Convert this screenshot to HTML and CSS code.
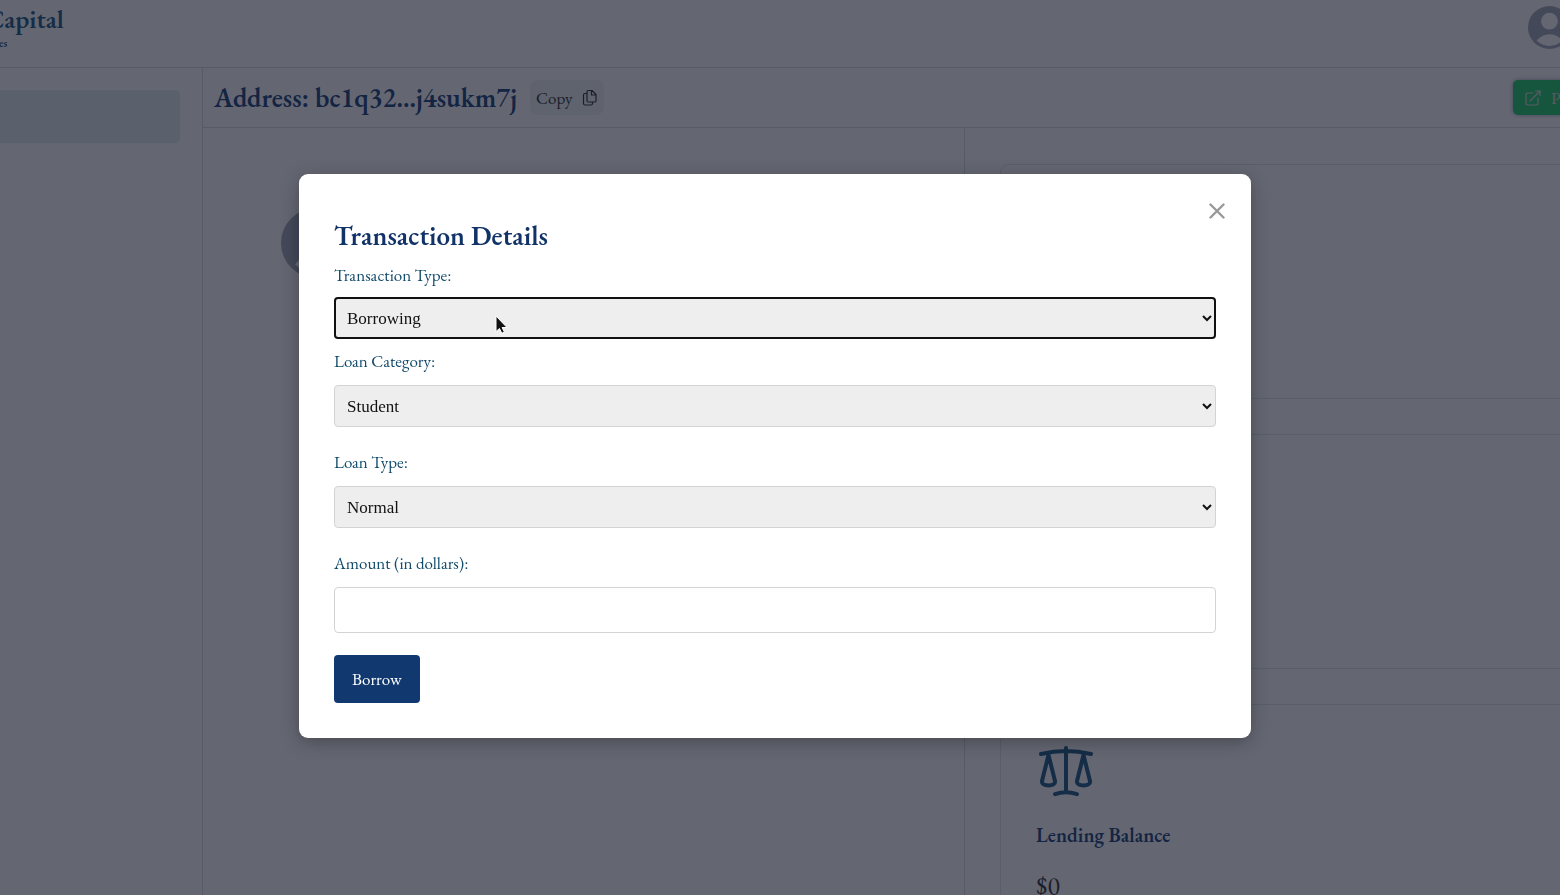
FILE: index.html
```html
<!DOCTYPE html>
<html lang="en">
<head>
<meta charset="utf-8">
<title>Capital</title>
<link rel="stylesheet" href="styles.css">
</head>
<body>
<svg class="defs" aria-hidden="true">
  <symbol id="user" viewBox="0 0 43 43">
    <path fill-rule="evenodd" d="M21.5 0a21.500 21.500 0 1 1 0 43a21.500 21.500 0 0 1 0-43zM21.500 6.800a8.400 8.400 0 1 0 0 16.800a8.400 8.400 0 0 0 0-16.800zM8.600 34.600C12 38 16.500 39.900 21.500 39.900S31 38 34.400 34.600C31 30.500 26.500 28.200 21.500 28.200S12 30.500 8.600 34.600z"/>
  </symbol>
</svg>
<div class="page">
  <header class="header">
    <div class="brand">
      <div class="brand-name">Capital</div>
      <div class="brand-sub">es</div>
    </div>
    <svg class="user-icon" aria-hidden="true"><use href="#user"/></svg>
  </header>
  <div class="body">
    <nav class="sidebar"><div class="nav-item"></div></nav>
    <main class="main">
      <div class="topbar">
        <h1 class="address">Address: bc1q32...j4sukm7j</h1>
        <button class="copy" type="button">Copy
          <svg width="16" height="18" viewBox="0 0 16 18" fill="none" stroke="currentColor" stroke-width="1.2" stroke-linejoin="round" aria-hidden="true"><path d="M10 1.500H6.500A1.500 1.500 0 0 0 5 3v8.500A1.500 1.500 0 0 0 6.500 13h6A1.500 1.500 0 0 0 14 11.500V5.500zM9.500 1.500V6H14M5 4.500H3A1.500 1.500 0 0 0 1.500 6v8.500A1.500 1.500 0 0 0 3 16h6a1.500 1.500 0 0 0 1.500-1.500V13"/></svg>
        </button>
        <button class="open" type="button">
          <svg width="16" height="16" viewBox="0 0 16 16" fill="none" stroke="currentColor" stroke-width="1.200" stroke-linecap="round" stroke-linejoin="round" aria-hidden="true"><path d="M8 3H2.500A1.500 1.500 0 0 0 1 4.500v9A1.500 1.500 0 0 0 2.500 15h9a1.500 1.500 0 0 0 1.500-1.500V8M10.500 1H15v4.500M15 1L5 11"/></svg>
          <span>Po</span>
        </button>
      </div>
      <div class="columns">
        <section class="profile"><svg class="profile-icon" aria-hidden="true"><use href="#user"/></svg></section>
        <section class="cards">
          <div class="card"></div>
          <div class="card"></div>
          <div class="card">
            <svg class="scale" width="60" height="60" viewBox="0 0 60 60" fill="none" stroke="currentColor" stroke-width="4" stroke-linecap="round" stroke-linejoin="round" aria-hidden="true"><path d="M30 8v44M5 14Q30 8 55 14M19 54.200Q30 50.500 41 54.200M12.500 15L6 41c-.6 3 2.500 4.500 6.500 4.500s7.100-1.500 6.500-4.500zM47.500 15L41 41c-.6 3 2.500 4.500 6.500 4.500s7.100-1.500 6.500-4.500z"/></svg>
            <h2 class="card-title">Lending Balance</h2>
            <p class="card-value">$0</p>
          </div>
        </section>
      </div>
    </main>
  </div>
</div>
<div class="overlay">
  <form class="modal" role="dialog" aria-labelledby="title">
    <button class="close" type="button" aria-label="Close"><svg width="16" height="16" viewBox="0 0 16 16" fill="none" stroke="currentColor" stroke-width="2.400" stroke-linecap="round" aria-hidden="true"><path d="M1.500 1.500l13 13M14.500 1.500l-13 13"/></svg></button>
    <h2 class="title" id="title">Transaction Details</h2>
    <div class="field field-first">
      <label for="transaction">Transaction Type:</label>
      <select class="active" id="transaction"><option>Borrowing</option></select>
    </div>
    <div class="field">
      <label for="category">Loan Category:</label>
      <select id="category"><option>Student</option></select>
    </div>
    <div class="field">
      <label for="loan">Loan Type:</label>
      <select id="loan"><option>Normal</option></select>
    </div>
    <div class="field">
      <label for="amount">Amount (in dollars):</label>
      <input id="amount" type="text">
    </div>
    <button class="submit" type="submit">Borrow</button>
  </form>
  <svg class="cursor" width="14" height="20" viewBox="0 0 14 20" aria-hidden="true"><path d="M1 1v15.500l3.500-3 2.300 4.800 2.600-1.200-2.300-4.600H12z" fill="#111" stroke="#fff" stroke-width="1"/></svg>
</div>
</body>
</html>
```
FILE: styles.css
```css
* { box-sizing: border-box; }
body {
  margin: 0;
  height: 100vh;
  overflow: hidden;
  font-family: "EB Garamond", "Liberation Serif", serif;
  font-size: 17px;
  background: #fff;
}
h1, h2, p { margin: 0; }
button, input, select { font: inherit; }
svg { flex: none; display: block; }
.defs { position: absolute; width: 0; height: 0; }

.page { height: 100vh; display: flex; flex-direction: column; overflow: hidden; }
.header {
  height: 68px;
  flex: none;
  display: flex;
  justify-content: space-between;
  border-bottom: 1px solid #d8dce0;
}
.brand { color: #1d5a80; margin-left: -14px; padding-top: 5px; font-weight: 600; }
.brand-name { font-size: 26px; line-height: 28px; }
.brand-sub { font-size: 11px; line-height: 20px; padding-left: 13px; }
.user-icon { width: 43px; height: 43px; margin: 6px -11px 0 0; fill: #a4a8b8; }

.body { flex: 1; display: flex; min-height: 0; }
.sidebar { width: 203px; flex: none; padding: 22px 22px 0 0; border-right: 1px solid #d8dce0; }
.nav-item { height: 53px; border-radius: 0 5px 5px 0; background: #e4eaf1; }
.main { flex: 1; min-width: 0; display: flex; flex-direction: column; }
.topbar {
  height: 60px;
  flex: none;
  display: flex;
  align-items: center;
  padding-left: 11px;
  border-bottom: 1px solid #d8dce0;
}
.address { font-size: 27px; font-weight: 600; line-height: 36px; color: #1b4079; white-space: nowrap; }
.copy {
  display: flex;
  align-items: center;
  gap: 10px;
  height: 35px;
  margin-left: 13px;
  padding: 0 6px;
  border: 0;
  border-radius: 8px;
  background: #edf2f2;
  color: #333;
}
.open {
  display: flex;
  align-items: center;
  gap: 10px;
  width: 62px;
  height: 35px;
  margin: 0 -15px 0 auto;
  padding: 0 12px;
  border: 0;
  border-radius: 5px;
  background: #22cc6a;
  color: #ddd;
  box-shadow: 0 0 4px #99a;
}
.columns { flex: 1; min-height: 0; display: flex; }
.profile { flex: 0 0 56.15%; padding: 80px 78px; border-right: 1px solid #d8dce0; }
.profile-icon { width: 70px; height: 70px; fill: #a4a8b8; }
.cards {
  flex: 1;
  display: flex;
  flex-direction: column;
  gap: 35px;
  margin-right: -20px;
  padding: 36px 0 0 35px;
}
.card {
  flex: none;
  height: 235px;
  padding: 35px;
  border: 1px solid #e3e6e9;
  border-radius: 8px;
}
.scale { color: #1d5a80; }
.card-title { margin-top: 20px; font-size: 20px; font-weight: 600; line-height: 30px; color: #1b4079; }
.card-value { margin-top: 19px; font-size: 26px; line-height: 34px; color: #333; }

.overlay {
  position: fixed;
  inset: 0;
  display: flex;
  justify-content: center;
  align-items: flex-start;
  padding: 174px 20px 20px 10px;
  background: rgba(17, 21, 38, .65);
}
.modal {
  position: relative;
  width: 100%;
  max-width: 952px;
  padding: 35px;
  border-radius: 9px;
  background: #fff;
  box-shadow: 0 4px 18px rgba(0, 0, 0, .3);
}
.close {
  position: absolute;
  top: 29px;
  right: 26px;
  padding: 0;
  border: 0;
  background: none;
  color: #999;
}
.title { font-size: 27px; font-weight: 600; line-height: 53px; color: #113368; }
.field { display: flex; flex-direction: column; gap: 11px; margin-bottom: 22px; }
.field-first { gap: 9px; margin-bottom: 9px; }
.field label { line-height: 26px; color: #104a6b; }
.field select, .field input {
  width: 100%;
  height: 42px;
  padding: 0 8px;
  border: 1px solid #d3d3d3;
  border-radius: 4px;
  background: #eee;
  color: #111;
  font-family: "Liberation Serif", serif;
}
.field input { height: 46px; background: #fff; }
.field .active { outline: 2px solid #111; outline-offset: -2px; }
.submit {
  display: block;
  height: 48px;
  padding: 0 18px;
  border: 0;
  border-radius: 4px;
  background: #11396f;
  color: #fff;
}
.cursor { position: absolute; left: 495px; top: 315px; }
```
